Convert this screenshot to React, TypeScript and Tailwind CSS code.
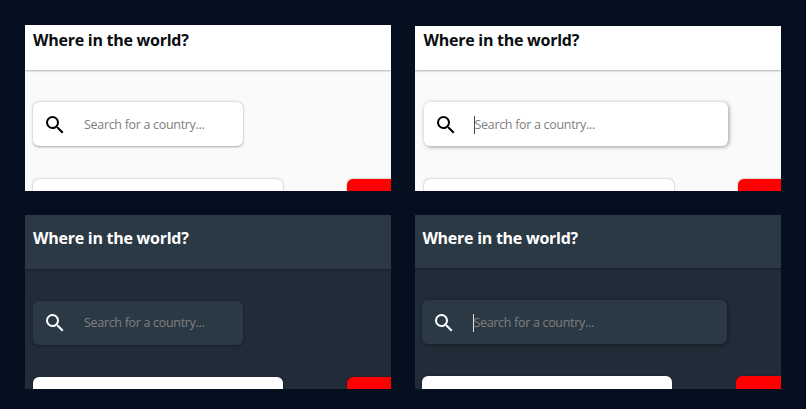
import { MdSearch } from "react-icons/md";

type PanelProps = {
  dark?: boolean;
  focused?: boolean;
  frame: string;
  header: string;
  title: string;
  field: string;
  body: string;
  card: string;
  action: string;
};

function Panel({ dark, focused, frame, header, title, field, body, card, action }: PanelProps) {
  return (
    <section className={`flex flex-col overflow-hidden ${frame} ${dark ? "bg-[#202c37] text-white" : "bg-[#fafafa] text-[#0b0e10]"}`}>
      <header className={`shrink-0 ${header} ${dark ? "bg-[#2b3945] shadow-[0_1px_2px_rgba(0,0,0,0.3)]" : "bg-white shadow-[0_1px_2px_rgba(0,0,0,0.3)]"}`}>
        <h1 className={`whitespace-nowrap font-['Open_Sans',sans-serif] text-[16px] leading-[20px] font-bold tracking-[-0.26px] ${title}`}>
          Where in the world?
        </h1>
      </header>
      <div className={`flex flex-col ${body}`}>
        <div
          className={`flex h-11 shrink-0 items-center rounded-[6px] pl-[10px] ${field} ${dark ? "bg-[#2b3945]" : "bg-white"} ${
            focused ? "shadow-[1px_1px_4px_rgba(0,0,0,0.38)]" : "shadow-[0_0.5px_2.5px_rgba(0,0,0,0.35)]"
          }`}
        >
          <MdSearch className={`size-6 shrink-0 ${dark ? "text-white" : "text-black"}`} />
          <span className="relative ml-[17px] whitespace-nowrap font-['Open_Sans',sans-serif] text-[12.5px] leading-[18px] font-normal tracking-[-0.31px] text-[#808080]">
            {focused && <i className={`absolute top-0 left-[-0.5px] h-[18px] w-px ${dark ? "bg-[#dfe2e4]" : "bg-[#444444]"}`} />}
            Search for a country...
          </span>
        </div>
        <div className="flex">
          <div className={`h-12 shrink-0 rounded-[6px] bg-white shadow-[0_0_2px_rgba(0,0,0,0.4)] ${card}`} />
          <div className={`h-12 w-[250px] shrink-0 rounded-[6px] bg-[#ff0000] shadow-[0_0_2px_rgba(0,0,0,0.4)] ${action}`} />
        </div>
      </div>
    </section>
  );
}

export default function App() {
  return (
    <main className="flex h-[409px] w-[806px] flex-col gap-6 overflow-hidden bg-[#050f20] pt-[25px] pl-[25px]">
      <div className="flex gap-6">
        <Panel frame="h-[166px] w-[366px]" header="h-[45.4px] pl-2" title="pt-[5px]" body="gap-[32.2px] pt-8 pl-2" field="w-[210px] pt-[1.2px]" card="w-[250px]" action="ml-16" />
        <Panel focused frame="mt-px h-[165px] w-[366px]" header="h-[44.4px] pl-[8.5px]" title="pt-1" body="gap-[32.2px] pt-8 pl-[8.5px]" field="w-[304.5px] pt-[1.2px]" card="w-[250px]" action="ml-16" />
      </div>
      <div className="flex gap-6">
        <Panel dark frame="h-[174px] w-[366px]" header="h-[54px] pl-2" title="pt-[13px]" body="gap-8 pt-8 pl-2" field="w-[210px]" card="w-[250px]" action="ml-16" />
        <Panel dark focused frame="h-[174px] w-[366px]" header="h-[53.4px] pl-[7.4px]" title="pt-[13px]" body="gap-8 pt-8 pl-[7.4px]" field="w-[304.4px] pt-[1.2px]" card="w-[250px]" action="ml-16" />
      </div>
    </main>
  );
}
